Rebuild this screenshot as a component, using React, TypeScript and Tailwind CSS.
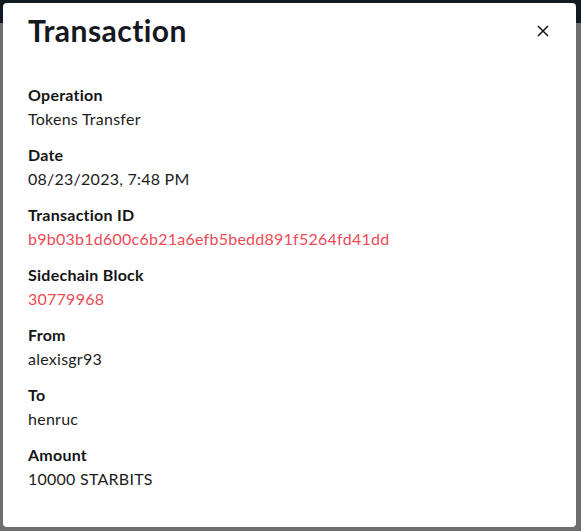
import React from "react";

interface Field {
  label: string;
  value: string;
  link?: boolean;
}

const fields: Field[] = [
  { label: "Operation", value: "Tokens Transfer" },
  { label: "Date", value: "08/23/2023, 7:48 PM" },
  { label: "Transaction ID", value: "b9b03b1d600c6b21a6efb5bedd891f5264fd41dd", link: true },
  { label: "Sidechain Block", value: "30779968", link: true },
  { label: "From", value: "alexisgr93" },
  { label: "To", value: "henruc" },
  { label: "Amount", value: "10000 STARBITS" },
];

const App: React.FC = () => {
  return (
    <div className="relative w-[581px] h-[531px] overflow-hidden font-['Lato',sans-serif]">
      {/* page behind the backdrop */}
      <div className="flex flex-col h-full">
        <div className="h-[23px] bg-[#111a22]" />
        <div className="flex-1 bg-[#6e6e6e]" />
      </div>

      {/* modal */}
      <div className="absolute left-[3px] top-[3px] w-[573px] h-[524px] bg-white rounded-[4px] pt-[9px] pl-[25px] pr-[26px] text-[#1c1c1c]">
        <header className="flex items-center justify-between h-[36px]">
          <h1 className="text-[30px] leading-[36px] font-bold tracking-[0.45px] text-[#151820]">Transaction</h1>
          <button className="w-[14px] h-[14px] mt-[2px] flex items-center justify-center text-[#111]">
            <svg width="12" height="12" viewBox="0 0 12 12" fill="none" stroke="currentColor" strokeWidth="1.5">
              <path d="M1 1L11 11M11 1L1 11" />
            </svg>
          </button>
        </header>
        <div className="mt-[35px] flex flex-col gap-[12px]">
          {fields.map((f) => (
            <div key={f.label} className="text-[16px] leading-[24px] tracking-[0.25px]">
              <div className="font-bold text-[#151515]">{f.label}</div>
              <div className={f.link ? "text-[#ec4a55]" : "text-[#1c1c1c]"}>{f.value}</div>
            </div>
          ))}
        </div>
      </div>
    </div>
  );
};

export default App;
